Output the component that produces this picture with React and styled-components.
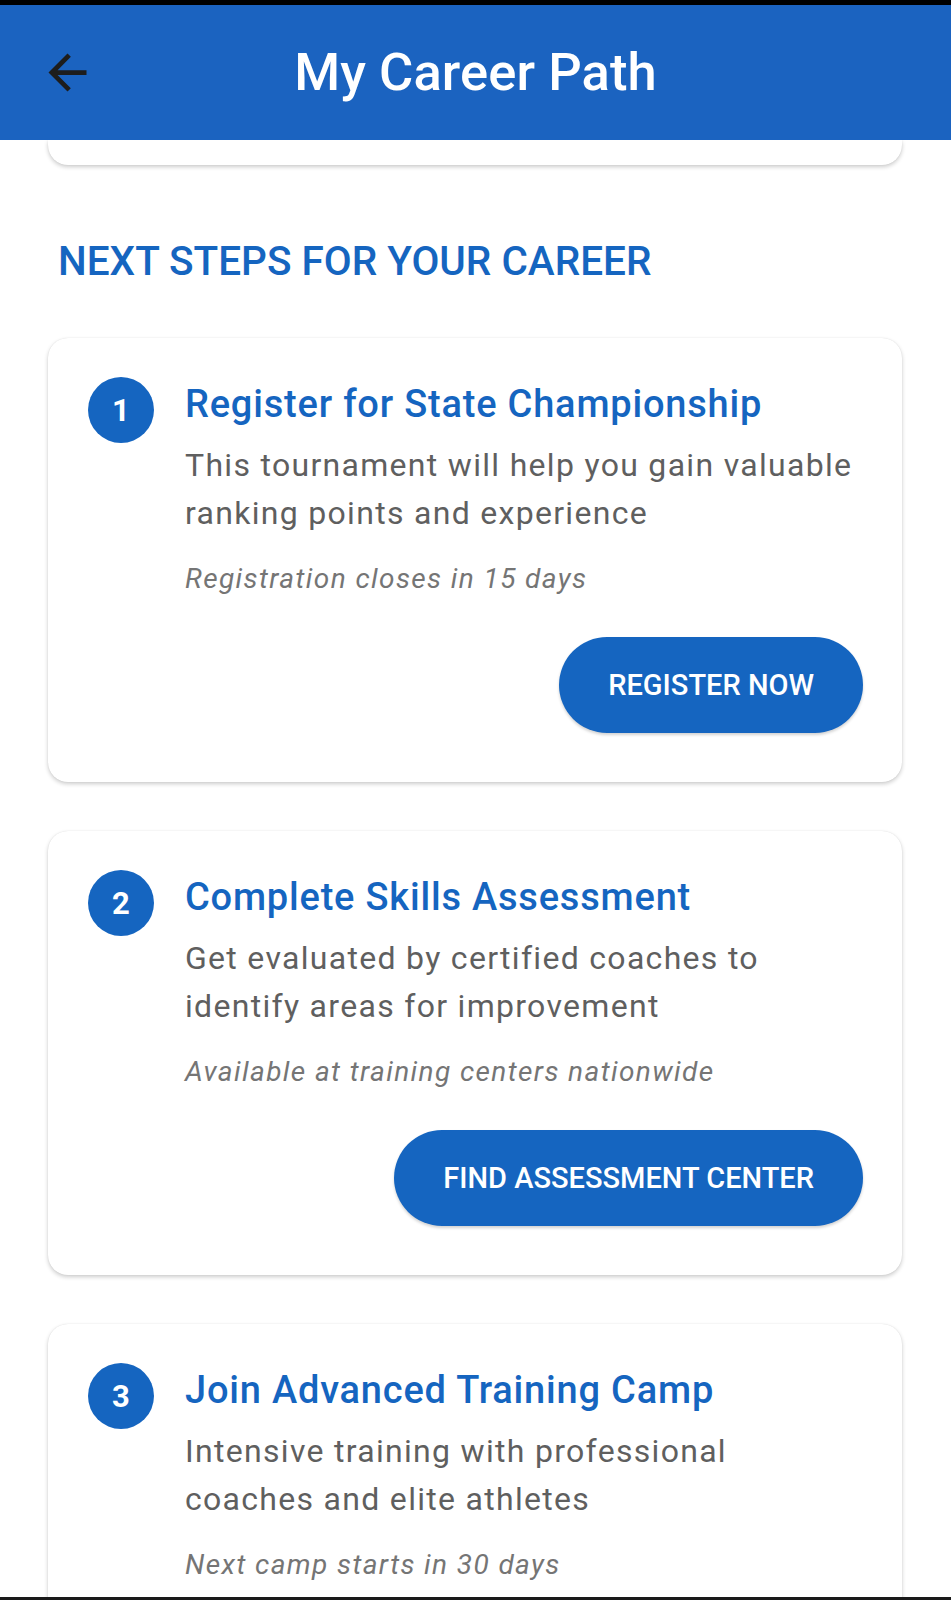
import React from "react";
import styled, { createGlobalStyle } from "styled-components";

const GlobalStyle = createGlobalStyle`
  html, body { margin: 0; padding: 0; background: #ffffff; }
  body { font-family: Roboto, "Noto Sans", "Liberation Sans", sans-serif; }
  * { box-sizing: border-box; }
`;

const Screen = styled.div`
  display: flex;
  flex-direction: column;
  height: 1600px;
  overflow: hidden;
  background: #ffffff;
`;

const StatusBar = styled.div`
  height: 5px;
  flex: none;
  background: #000000;
`;

const Header = styled.header`
  position: relative;
  z-index: 2;
  flex: none;
  height: 135px;
  background: #1b63c0;
  display: grid;
  grid-template-columns: 120px 1fr 120px;
  align-items: center;
`;

const BackButton = styled.button`
  justify-self: start;
  margin-left: 39px;
  width: 57px;
  height: 57px;
  padding: 0;
  border: none;
  background: transparent;
  display: flex;
  align-items: center;
  justify-content: center;
  color: #1d1d1d;
  svg { width: 57px; height: 57px; display: block; }
`;

const Title = styled.h1`
  margin: 0;
  text-align: center;
  color: #ffffff;
  font-size: 52.5px;
  font-weight: 500;
  line-height: 1;
  letter-spacing: 0.1px;
`;

const NavBar = styled.div`
  height: 3px;
  flex: none;
  background: #1a1a1a;
`;

const Scroll = styled.main`
  flex: 1;
  overflow: hidden;
  padding: 0 49px 0 48px;
`;

const CardShell = styled.section`
  background: #ffffff;
  border-radius: 20px;
  box-shadow: 0 2px 4px rgba(0, 0, 0, 0.2), 0 0 1px rgba(0, 0, 0, 0.12);
`;

const PrevCard = styled(CardShell)`
  height: 25px;
  border-top-left-radius: 0;
  border-top-right-radius: 0;
`;

const SectionTitle = styled.h2`
  margin: 72px 0 53px 10px;
  color: #1565c0;
  font-size: 40.5px;
  font-weight: 500;
  line-height: 48px;
  text-transform: uppercase;
`;

const CardList = styled.div`
  display: flex;
  flex-direction: column;
  gap: 49px;
`;

const StepCard = styled(CardShell)`
  padding: 39px 39px 49px 40px;
`;

const StepRow = styled.div`
  display: flex;
  align-items: flex-start;
  gap: 31px;
`;

const StepNumber = styled.div`
  flex: none;
  width: 66px;
  height: 66px;
  border-radius: 50%;
  background: #1565c0;
  color: #ffffff;
  display: flex;
  align-items: center;
  justify-content: center;
  font-size: 31px;
  font-weight: 700;
`;

const StepBody = styled.div`
  flex: 1;
  min-width: 0;
  padding-top: 3px;
`;

const StepTitle = styled.h3`
  margin: 0;
  color: #1565c0;
  font-size: 38px;
  font-weight: 500;
  line-height: 48px;
  letter-spacing: 0.8px;
`;

const StepText = styled.p`
  margin: 13px 0 0;
  color: #5f5f5f;
  font-size: 32px;
  font-weight: 400;
  line-height: 48px;
  letter-spacing: 1.3px;
`;

const StepNote = styled.p`
  margin: 22px 0 0;
  color: #757575;
  font-size: 28px;
  font-style: italic;
  line-height: 40px;
  letter-spacing: 1.4px;
`;

const Actions = styled.div`
  display: flex;
  justify-content: flex-end;
  margin-top: 38px;
`;

const ActionButton = styled.button`
  height: 96px;
  padding: 0 49px;
  border: none;
  border-radius: 48px;
  background: #1565c0;
  color: #ffffff;
  font-family: inherit;
  font-size: 29px;
  font-weight: 500;
  letter-spacing: 0;
  text-transform: uppercase;
  box-shadow: 0 2px 3px rgba(0, 0, 0, 0.18);
  cursor: pointer;
`;

const steps = [
  {
    n: 1,
    title: "Register for State Championship",
    text: "This tournament will help you gain valuable ranking points and experience",
    note: "Registration closes in 15 days",
    action: "Register Now",
  },
  {
    n: 2,
    title: "Complete Skills Assessment",
    text: "Get evaluated by certified coaches to identify areas for improvement",
    note: "Available at training centers nationwide",
    action: "Find Assessment Center",
  },
  {
    n: 3,
    title: "Join Advanced Training Camp",
    text: "Intensive training with professional coaches and elite athletes",
    note: "Next camp starts in 30 days",
    action: "Apply Now",
  },
];

const ArrowBack = () => (
  <svg viewBox="0 0 24 24" aria-hidden="true">
    <path
      fill="currentColor"
      d="M20 11H7.83l5.59-5.59L12 4l-8 8 8 8 1.41-1.41L7.83 13H20v-2z"
    />
  </svg>
);

export default function App() {
  return (
    <>
      <GlobalStyle />
      <Screen>
        <StatusBar />
        <Header>
          <BackButton aria-label="Back">
            <ArrowBack />
          </BackButton>
          <Title>My Career Path</Title>
          <span />
        </Header>
        <Scroll>
          <PrevCard />
          <SectionTitle>Next Steps for Your Career</SectionTitle>
          <CardList>
            {steps.map((s) => (
              <StepCard key={s.n}>
                <StepRow>
                  <StepNumber>{s.n}</StepNumber>
                  <StepBody>
                    <StepTitle>{s.title}</StepTitle>
                    <StepText>{s.text}</StepText>
                    <StepNote>{s.note}</StepNote>
                    <Actions>
                      <ActionButton>{s.action}</ActionButton>
                    </Actions>
                  </StepBody>
                </StepRow>
              </StepCard>
            ))}
          </CardList>
        </Scroll>
        <NavBar />
      </Screen>
    </>
  );
}
